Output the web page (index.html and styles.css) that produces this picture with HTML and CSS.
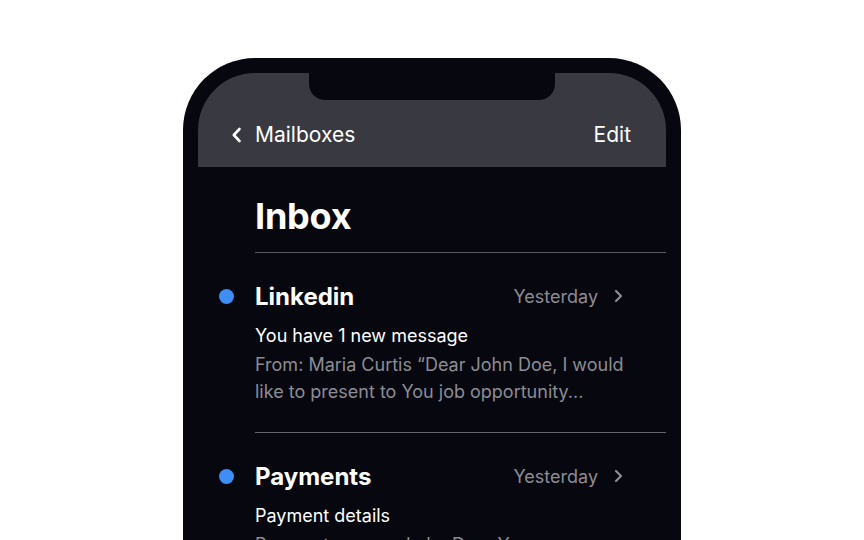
FILE: index.html
```html
<!DOCTYPE html>
<html lang="en">
<head>
<meta charset="utf-8">
<title>Inbox</title>
<link rel="stylesheet" href="styles.css">
</head>
<body>
<div class="phone">
  <div class="screen">
    <header class="header">
      <div class="notch"></div>
      <nav class="nav">
        <a class="back">
          <svg class="back-icon" width="11" height="16" viewBox="0 0 11 16"><path d="M8.5 2 L2.8 8 L8.5 14" fill="none" stroke="#fff" stroke-width="2.6" stroke-linecap="round" stroke-linejoin="round"/></svg>
          <span>Mailboxes</span>
        </a>
        <a class="edit">Edit</a>
      </nav>
    </header>
    <main class="content">
      <h1 class="title">Inbox</h1>
      <ul class="list">
        <li class="mail">
          <span class="dot"></span>
          <div class="mail-body">
            <div class="mail-head">
              <span class="sender">Linkedin</span>
              <span class="date">Yesterday</span>
              <svg class="chev" width="9" height="14" viewBox="0 0 9 14"><path d="M2 2 L7 7 L2 12" fill="none" stroke="#8c8c94" stroke-width="2.2" stroke-linecap="round" stroke-linejoin="round"/></svg>
            </div>
            <div class="subject">You have 1 new message</div>
            <div class="preview">From: Maria Curtis “Dear John Doe, I would like to present to You job opportunity...</div>
          </div>
        </li>
        <li class="mail">
          <span class="dot"></span>
          <div class="mail-body">
            <div class="mail-head">
              <span class="sender">Payments</span>
              <span class="date">Yesterday</span>
              <svg class="chev" width="9" height="14" viewBox="0 0 9 14"><path d="M2 2 L7 7 L2 12" fill="none" stroke="#8c8c94" stroke-width="2.2" stroke-linecap="round" stroke-linejoin="round"/></svg>
            </div>
            <div class="subject">Payment details</div>
            <div class="preview">Payment was made by Dear You, your payment of $240 has been processed successfully...</div>
          </div>
        </li>
      </ul>
    </main>
  </div>
</div>
</body>
</html>
```
FILE: styles.css
```css
* { box-sizing: border-box; }
html, body {
  margin: 0;
  padding: 0;
  background: #ffffff;
  height: 540px;
  overflow: hidden;
  font-family: Inter, "Noto Sans", sans-serif;
}
.phone {
  width: 498px;
  height: 600px;
  margin: 58px auto 0;
  background: #07070f;
  border-radius: 72px 72px 0 0;
  padding: 15px 15px 0;
}
.screen {
  height: 100%;
  background: #07070f;
  border-radius: 57px 57px 0 0;
  overflow: hidden;
}
.header {
  height: 94px;
  background: #393941;
  display: flex;
  flex-direction: column;
  align-items: center;
}
.notch {
  width: 246px;
  height: 27px;
  background: #07070f;
  border-radius: 0 0 16px 16px;
  flex: none;
}
.nav {
  align-self: stretch;
  display: flex;
  justify-content: space-between;
  align-items: center;
  padding: 0 35px 0 33px;
  margin-top: 23px;
  color: #ffffff;
  font-size: 21px;
  line-height: 24px;
}
.back {
  display: flex;
  align-items: center;
  gap: 13px;
}
.back-icon { display: block; }
.content {
  padding-left: 57px;
}
.title {
  margin: 0;
  padding-top: 25px;
  font-size: 36px;
  line-height: 48px;
  font-weight: 700;
  color: #ffffff;
  letter-spacing: -0.2px;
  border-bottom: 1px solid #5c5c64;
  padding-bottom: 12px;
}
.list {
  list-style: none;
  margin: 0;
  padding: 0;
}
.mail {
  position: relative;
  border-bottom: 1px solid #66666e;
  padding: 27px 0 27px;
}
.dot {
  position: absolute;
  left: -36px;
  top: 36px;
  width: 15px;
  height: 15px;
  border-radius: 50%;
  background: #3d8ff5;
}
.mail-head {
  display: flex;
  align-items: center;
  height: 32px;
  padding-right: 43px;
}
.sender {
  flex: 1;
  color: #ffffff;
  font-weight: 700;
  font-size: 24px;
}
.date {
  color: #8c8c94;
  font-size: 18px;
  margin-right: 16px;
}
.chev { display: block; }
.subject {
  margin-top: 10px;
  color: #ffffff;
  font-size: 18px;
  line-height: 27px;
}
.preview {
  margin-top: 2px;
  color: #8c8c94;
  font-size: 18px;
  line-height: 27px;
  padding-right: 40px;
}
```
